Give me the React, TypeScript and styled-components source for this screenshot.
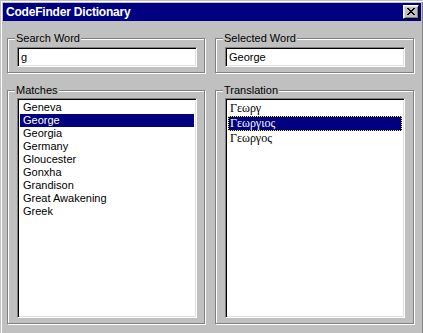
import React from 'react';
import styled, { createGlobalStyle } from 'styled-components';

const GlobalStyle = createGlobalStyle`
  html, body {
    margin: 0;
    padding: 0;
    background: #c0c0c0;
    overflow: hidden;
  }
  body {
    font-family: "Liberation Sans", Arial, sans-serif;
    font-size: 11px;
  }
`;

const matches = [
  'Geneva',
  'George',
  'Georgia',
  'Germany',
  'Gloucester',
  'Gonxha',
  'Grandison',
  'Great Awakening',
  'Greek',
];

const translations = ['Γεωργ', 'Γεωργιος', 'Γεωργος'];

const CloseGlyph: React.FC = () => (
  <svg width="8" height="7" viewBox="0 0 8 7" shapeRendering="crispEdges">
    <path
      d="M0 0h2v1H0zM6 0h2v1H6zM1 1h2v1H1zM5 1h2v1H5zM2 2h4v1H2zM3 3h2v1H3zM2 4h4v1H2zM1 5h2v1H1zM5 5h2v1H5zM0 6h2v1H0zM6 6h2v1H6z"
      fill="#000"
    />
  </svg>
);

const App: React.FC = () => {
  return (
    <>
      <GlobalStyle />
      <Window>
        <TitleBar>
          <TitleText>CodeFinder Dictionary</TitleText>
          <CloseButton aria-label="Close">
            <CloseGlyph />
          </CloseButton>
        </TitleBar>
        <Body>
          <Group>
            <Caption>Search Word</Caption>
            <TextBox readOnly value="g" />
          </Group>
          <Group>
            <Caption>Selected Word</Caption>
            <TextBox readOnly value="George" />
          </Group>
          <Group>
            <Caption>Matches</Caption>
            <ListBox>
              {matches.map((m) => (
                <MatchItem key={m} $selected={m === 'George'}>
                  {m}
                </MatchItem>
              ))}
            </ListBox>
          </Group>
          <Group>
            <Caption>Translation</Caption>
            <ListBox>
              {translations.map((t) => (
                <GreekItem key={t} $selected={t === 'Γεωργιος'}>
                  {t}
                </GreekItem>
              ))}
            </ListBox>
          </Group>
        </Body>
      </Window>
    </>
  );
};

const Window = styled.div`
  width: 424px;
  height: 340px;
  box-sizing: border-box;
  background: #c0c0c0;
  border: 1px solid;
  border-color: #c0c0c0 #000 #000 #c0c0c0;
  box-shadow: inset 1px 1px #fff, inset -1px -1px #808080;
  padding: 2px;
`;

const TitleBar = styled.div`
  height: 18px;
  background: #000080;
  display: flex;
  align-items: center;
  justify-content: space-between;
  padding: 0 2px 0 3px;
`;

const TitleText = styled.span`
  color: #fff;
  font-weight: bold;
  font-size: 12px;
  letter-spacing: -0.2px;
  line-height: 18px;
`;

const CloseButton = styled.div`
  width: 16px;
  height: 14px;
  box-sizing: border-box;
  background: #c0c0c0;
  border: 1px solid;
  border-color: #fff #000 #000 #fff;
  box-shadow: inset 1px 1px #dfdfdf, inset -1px -1px #808080;
  display: flex;
  align-items: center;
  justify-content: center;
  padding-bottom: 1px;

  svg {
    display: block;
  }
`;

const Body = styled.div`
  display: grid;
  grid-template-columns: 198px 199px;
  grid-template-rows: 35px 234px;
  column-gap: 10px;
  row-gap: 17px;
  padding: 17px 0 0 4px;
`;

const Group = styled.div`
  box-sizing: border-box;
  border: 1px solid #808080;
  box-shadow: inset 1px 1px #fff, 1px 1px #fff;
  display: flex;
  flex-direction: column;
`;

const Caption = styled.div`
  align-self: flex-start;
  margin: -7px 0 0 7px;
  padding: 0 1px;
  height: 13px;
  line-height: 13px;
  background: #c0c0c0;
  color: #000;
  font-size: 11px;
`;

const sunken = `
  box-sizing: border-box;
  background: #fff;
  border: 1px solid;
  border-color: #808080 #fff #fff #808080;
  box-shadow: inset 1px 1px #000, inset -1px -1px #dfdfdf;
`;

const TextBox = styled.input`
  ${sunken}
  width: 180px;
  height: 20px;
  margin: 2px 0 0 9px;
  padding: 0 2px 0 3px;
  font-family: "Liberation Sans", Arial, sans-serif;
  font-size: 11px;
  color: #000;
  outline: none;
`;

const ListBox = styled.ul`
  ${sunken}
  width: 180px;
  height: 220px;
  margin: 1px 0 0 9px;
  padding: 2px;
  list-style: none;
  overflow: hidden;
`;

const MatchItem = styled.li<{ $selected?: boolean }>`
  height: 13px;
  line-height: 13px;
  padding-left: 3px;
  font-size: 11px;
  white-space: nowrap;
  background: ${(p) => (p.$selected ? '#000080' : 'transparent')};
  color: ${(p) => (p.$selected ? '#fff' : '#000')};
`;

const GreekItem = styled.li<{ $selected?: boolean }>`
  height: 15px;
  line-height: 15px;
  padding-left: 2px;
  font-family: "Liberation Serif", "DejaVu Serif", serif;
  font-size: 12px;
  white-space: nowrap;
  background: ${(p) => (p.$selected ? '#000080' : 'transparent')};
  color: ${(p) => (p.$selected ? '#fff' : '#000')};
  outline: ${(p) => (p.$selected ? '1px dotted #ffff00' : 'none')};
  outline-offset: -1px;
`;

export default App;
